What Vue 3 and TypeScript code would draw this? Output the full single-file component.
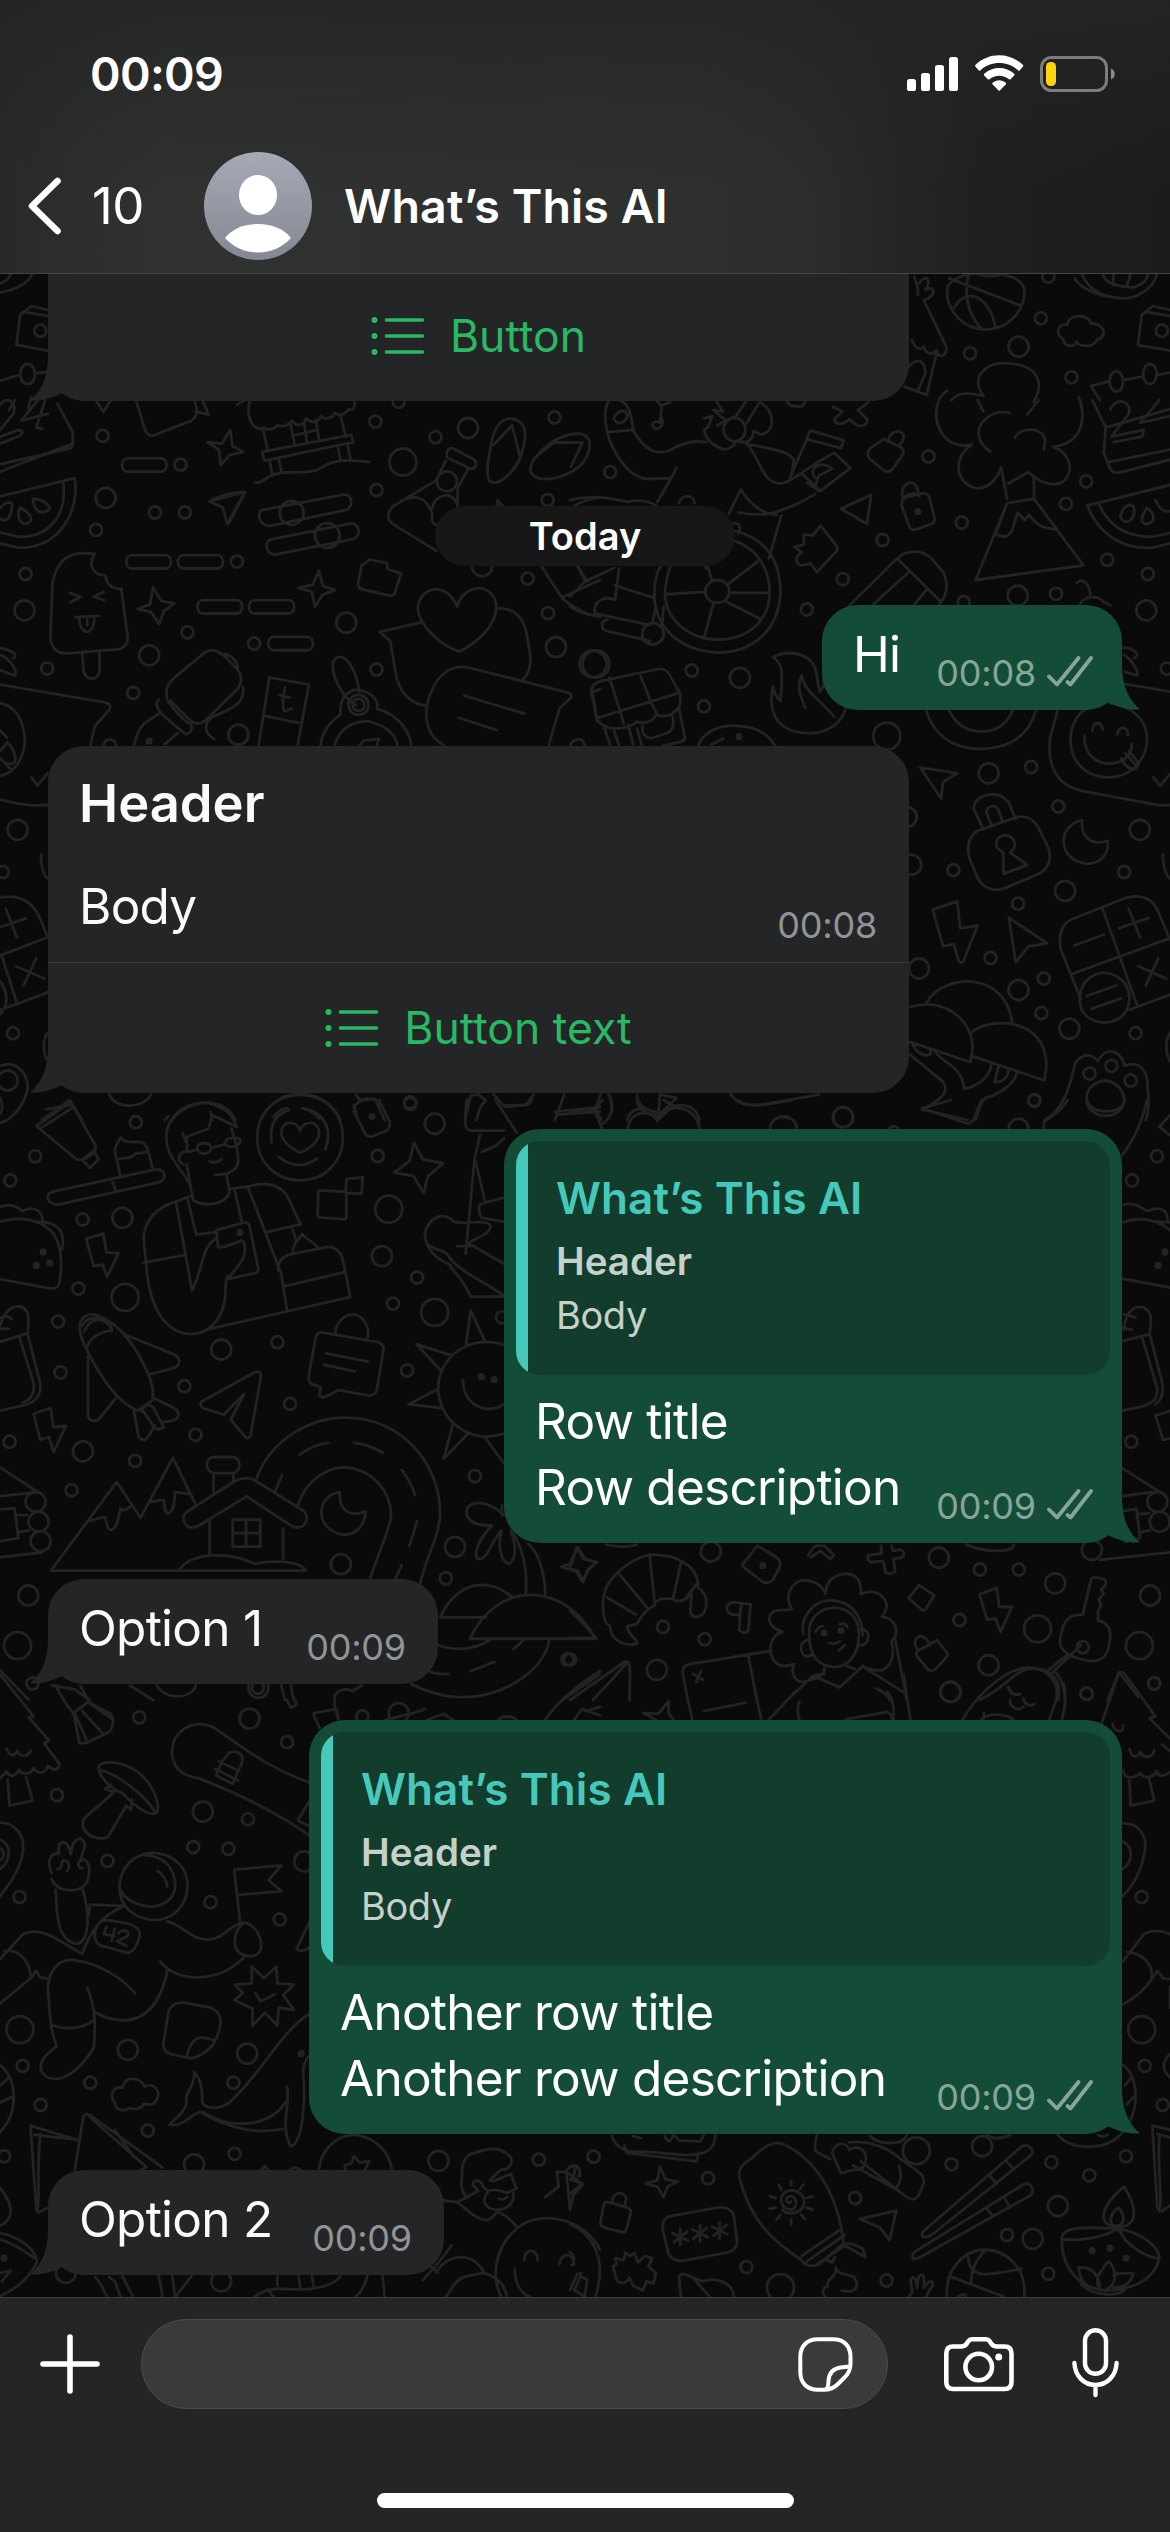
<script setup lang="ts">
interface Panel {
  /** x scale, y scale, x offset, y offset of the panel on the screen */
  at: [number, number, number, number]
  paths: string[]
  dots: [number, number, number][]
}

interface Message {
  id: number
  sent: boolean
  kind: 'plain' | 'card' | 'quote'
  lines: string[]
  time: string
  width: number
}

const messages: Message[] = [
  { id: 1, sent: true, kind: 'plain', lines: ['Hi'], time: '00:08', width: 300 },
  { id: 2, sent: false, kind: 'card', lines: ['Body'], time: '00:08', width: 861 },
  { id: 3, sent: true, kind: 'quote', lines: ['Row title', 'Row description'], time: '00:09', width: 618 },
  { id: 4, sent: false, kind: 'plain', lines: ['Option 1'], time: '00:09', width: 390 },
  { id: 5, sent: true, kind: 'quote', lines: ['Another row title', 'Another row description'], time: '00:09', width: 813 },
  { id: 6, sent: false, kind: 'plain', lines: ['Option 2'], time: '00:09', width: 396 },
]

const radii = [2.2, 6, 10, 13.5]

// Wallpaper doodles, grouped by the part of the screen they cover.
const panels: Panel[] = [
  {
    at: [0.7462, 0.33333, 0, 0],
    dots: [[1405, 830, 1], [1395, 955, 1], [1365, 1040, 2], [1300, 1060, 1], [1436, 1132, 1], [54, 992, 1], [1557, 992, 1]],
    paths: [
      'M1269 873C1269 800 1373 800 1373 873C1373 935 1350 989 1321 989S1269 935 1269 873',
      'M1272 835L1366 915M1278 925C1298 850 1328 900 1334 982M1298 822C1290 900 1300 950 1316 988M1310 822Q1325 835 1345 822',
      'M1425 1018C1412 1000 1420 965 1430 975C1432 940 1458 940 1462 970C1480 970 1485 1010 1470 1020C1465 1045 1445 1040 1443 1025C1440 1045 1425 1040 1425 1018Z',
      'M1225 830C1228 850 1232 870 1230 885M1232 850C1240 820 1250 840 1240 870C1255 850 1254 895 1238 900L1268 1040C1270 1075 1255 1075 1255 1050C1250 1070 1240 1060 1238 1040C1232 1055 1225 1040 1222 1020',
      'M1255 1060L1242 1185L1212 1160M1218 1100C1232 1065 1240 1090 1240 1120L1230 1172',
      'M1450 822C1458 870 1480 895 1510 895C1535 885 1548 850 1550 822M1478 822C1480 850 1500 862 1520 862C1535 850 1538 835 1538 822M1492 822V856M1515 822L1510 860M1440 835C1450 870 1470 890 1506 895',
      'M1568 930L1545 918L1530 945L1525 1035L1568 1052M1534 935L1568 948',
      'M64 930L42 918L27 945L22 1035L64 1052M31 935L64 948',
      'M0 1142L26 1125M48 1120L64 1115M37 1092C50 1092 50 1152 37 1152S24 1092 37 1092',
      'M1568 1118L1551 1125M1530 1130L1507 1140M1485 1145L1462 1158L1474 1200M1496 1114C1508 1114 1508 1174 1496 1174S1484 1114 1496 1114M1541 1092C1553 1092 1553 1152 1541 1152S1529 1092 1541 1092',
      'M0 878C20 870 38 850 43 822M0 850C8 845 12 835 15 822',
      'M1275 1200C1285 1175 1300 1178 1318 1188C1300 1130 1320 1085 1352 1090C1392 1095 1400 1150 1385 1206',
      'M42 1190L38 1225M20 1200L12 1230',
    ],
  },
  {
    at: [0.38265, 0.45918, 0, 400],
    dots: [[268, 78, 1], [472, 141, 1], [276, 213, 2], [251, 283, 1], [405, 245, 1], [483, 245, 1], [619, 352, 1], [67, 379, 1], [64, 458, 2], [123, 585, 1], [348, 638, 1], [390, 556, 2], [490, 506, 1], [664, 530, 1], [905, 485, 2], [623, 729, 2], [984, 587, 1], [984, 196, 1], [981, 47, 1], [1138, 81, 1], [1223, 61, 2], [1449, 38, 1], [1053, 135, 3], [1431, 218, 1], [1379, 389, 1], [1432, 464, 1], [1453, 538, 2], [1550, 575, 3], [46, 936, 2], [7, 1028, 1], [34, 1379, 1], [20, 1482, 2], [937, 664, 2], [937, 664, 1], [1168, 177, 2], [390, 743, 0], [1260, 362, 2], [287, 752, 1], [1072, 1530, 1], [1042, 4, 1]],
    paths: [
      'M0 10C20 -10 45 5 35 30L0 65M0 80L50 65Q66 68 52 78L0 95M110 -10L55 45L125 30M118 0L95 60L110 62M150 8L190 70V95L185 105L0 140M190 95L0 156',
      'M0 210L195 170C208 240 160 322 50 322L0 312M165 180C175 240 140 298 50 298L0 288M52 235C40 260 60 275 72 268C90 262 80 245 52 235M86 215C88 240 105 250 122 242C142 236 120 218 86 215M0 235C15 222 28 220 32 228C30 250 20 270 0 258',
      'M334 127H420C440 127 440 156 420 156H334C314 156 314 127 334 127ZM345 338H432C452 338 452 367 432 367H345C325 367 325 338 345 338ZM480 338H568C588 338 588 367 568 367H480C460 367 460 338 480 338ZM531 436H618C638 436 638 465 618 465H531C511 465 511 436 531 436ZM666 436H754C774 436 774 465 754 465H666C646 465 646 436 666 436ZM716 516H803C823 516 823 545 803 545H716C696 545 696 516 716 516Z',
      'M542 92L580 95L602 65L607 100L636 113L600 120L577 142L572 108ZM360 455L392 445L400 408L422 438L456 443L428 460L416 488L395 462ZM780 409L818 402L833 372L844 405L875 414L842 425L823 451L815 418ZM250 0L270 26L290 0',
      'M640 200L547 221L582 234L594 270ZM548 221C560 212 630 195 640 203L598 268',
      'M355 0L378 62Q385 82 405 76L500 45Q520 35 512 10L505 -5M512 25L545 32L530 2M620 10L650 -5',
      'M653 0C640 40 665 72 690 60C700 68 720 62 725 55C740 60 755 55 762 45C775 60 795 55 800 40C820 55 835 45 838 35C850 45 870 38 875 28C895 40 905 25 912 20C925 25 930 10 925 0M688 65L700 110M890 35L904 80M760 55L770 96M825 42L834 86M795 50L802 92M764 78L828 65M684 113L918 76L923 92L692 132ZM705 132L712 165M728 128L736 156M883 103L890 130M908 98L916 128M668 180C690 182 695 165 715 163C750 150 790 165 830 152C870 130 900 128 964 135',
      'M683 240L898 206C922 204 925 235 902 240L705 274C676 274 672 245 683 240M706 304L910 270C938 262 948 297 922 303L722 336C694 338 690 310 706 304M762 220C804 222 804 270 762 272C720 270 720 222 762 220M855 268C898 270 898 320 855 322C813 320 813 270 855 268',
      'M137 400C150 340 190 328 248 335C230 355 240 382 275 382C280 405 295 412 317 411L332 505C338 530 325 542 305 543L175 552C145 553 130 535 132 510ZM215 548L218 590C225 612 255 612 260 590V546M182 420L210 429L185 440M270 418L245 428L272 436M197 473L258 470M207 473C205 515 250 515 246 472M228 474V490',
      'M0 620L270 658Q295 662 285 675L248 710L236 752M0 660C40 665 65 700 65 745C60 790 30 815 0 818M0 720L18 735M20 745L0 765M25 750C50 780 42 800 15 790M0 780L30 806M82 822L98 840L125 812M0 870C60 882 90 885 125 882M0 540C30 545 50 555 35 562M0 555C20 560 50 590 38 600L0 588',
      'M350 752C360 720 370 705 385 700L415 683M430 750L465 725M437 650C430 630 440 618 455 605L535 550C555 540 570 545 590 560L618 585C635 600 632 618 620 630L540 695C525 708 508 708 490 692L445 655M415 652C395 670 430 690 485 728C500 725 505 715 498 705C480 700 450 670 438 655M575 553C605 550 620 570 622 585M635 625C640 660 610 670 570 685C530 695 530 725 560 738',
      'M676 752L704 604L807 620L778 752M690 688L787 704M745 626C740 640 735 670 745 678L762 672M730 642L756 648',
      'M930 665C880 640 850 565 885 560C910 555 935 600 938 635M890 685C885 640 925 625 945 633C975 640 990 655 985 672C1040 685 1070 720 1075 752M890 685C855 705 840 730 838 752M875 752C885 715 925 698 965 700C1010 710 1035 730 1038 752M940 752L950 742L990 738L985 752',
      'M1168 125C1165 105 1178 102 1190 108L1235 128C1250 135 1245 150 1230 150L1175 128M1165 132L1140 175L1030 230C1008 245 1012 262 1030 272L1140 328M1222 152L1196 192V232M1065 215C1100 205 1120 225 1130 248C1125 270 1140 275 1145 270M1130 235C1135 205 1185 195 1196 230',
      'M1283 100C1290 55 1315 35 1345 42C1378 50 1378 80 1360 125C1340 160 1310 182 1288 180C1270 178 1270 150 1283 100M1338 55L1290 98M1338 55L1358 120M1395 130C1430 90 1480 70 1520 74C1550 82 1545 110 1525 135C1495 165 1430 180 1400 168C1380 158 1385 145 1395 130M1448 92L1522 93L1492 145M1448 92L1395 128',
      'M945 360L955 355L965 347L1012 355L1012 368L1048 378L1032 420Q1028 428 1018 426L945 412Q934 408 936 398ZM1300 218L1315 232H1298Z',
      'M1200 548C1150 535 1095 490 1092 455C1092 410 1165 390 1195 450C1210 400 1290 395 1297 448C1300 490 1245 530 1200 548M1098 485L992 505L1020 525L1035 600C1045 640 1080 665 1115 665M1300 454C1350 452 1375 480 1380 530C1390 560 1388 590 1368 608',
      'M1160 752C1110 730 1105 680 1125 640C1145 595 1180 578 1220 582L1480 636Q1500 642 1490 650L1462 672L1434 752M1213 644L1370 683M1198 692L1298 719M1568 630L1548 636L1560 700M1490 752C1500 735 1525 735 1528 752',
      'M1500 232C1530 215 1568 212 1568 212M1415 362L1468 430L1568 392M1468 430C1490 450 1540 470 1568 472M1510 362L1535 395',
      'M0 1083C60 1075 90 1100 105 1130L125 1170M0 1210L125 1170M5 1212L45 1315M0 1328L45 1315L125 1290M15 1108L44 1170M0 1148L68 1129M42 1233L116 1260M95 1215L62 1275M0 1265C20 1290 25 1315 0 1338M108 990C105 1015 115 1035 125 1042M125 1378C112 1390 112 1420 122 1435M0 1450L10 1448C45 1440 75 1470 72 1500C65 1535 30 1568 0 1575M0 1520C10 1540 5 1550 0 1555',
      'M110 1568L182 1525L215 1568M120 1545L185 1535M285 1512C300 1545 375 1545 395 1512M450 1568C480 1520 590 1515 615 1568M550 1550L555 1568M680 1568C720 1495 850 1495 890 1568M715 1562Q735 1540 752 1543M790 1542Q820 1548 835 1565M930 1512L940 1525L980 1522L1005 1568M925 1535L935 1568M1215 1568L1230 1515L1250 1512L1270 1525L1255 1540L1245 1568M1290 1512L1320 1540L1375 1535L1395 1512M1475 1512L1450 1568M1450 1550L1568 1540M430 1568L440 1560',
    ],
  },
  {
    at: [0.38265, 0.45918, 570, 400],
    dots: [[105, 157, 1], [937, 123, 1], [1024, 267, 1], [817, 305, 1], [713, 390, 1], [619, 456, 1], [68, 575, 3], [318, 589, 1], [444, 605, 2], [350, 667, 1], [1170, 426, 2], [1270, 422, 1], [1296, 226, 1], [1349, 177, 1], [1404, 348, 1], [1510, 379, 1], [1506, 458, 2], [828, 732, 3], [1094, 813, 2], [1205, 799, 1], [1276, 885, 1], [1489, 936, 2], [1002, 1024, 1], [1448, 1028, 1], [1294, 1069, 2], [1171, 1097, 1], [1099, 1215, 1], [912, 1238, 2], [1238, 1260, 1], [1172, 1285, 2], [1232, 1335, 1], [1305, 1369, 2], [1478, 1379, 1], [1214, 1525, 1], [1358, 1467, 1], [1415, 1450, 1], [1465, 1482, 1], [909, 243, 0], [442, 733, 0], [713, 1562, 2], [1560, 585, 1], [1029, 440, 1], [892, 1012, 2], [880, 908, 2]],
    paths: [
      'M102 0C88 20 90 45 98 70L165 65C160 30 155 10 130 0M115 40C120 25 150 15 150 35C145 50 125 55 118 45M98 72C110 110 150 168 200 172L265 170L278 148M265 170L228 222M165 66C195 110 225 120 260 110C300 90 330 88 355 92',
      'M225 0L238 12L262 5M240 12L235 50C220 42 208 55 222 62C235 65 245 55 240 40',
      'M380 0L400 25L375 22L408 45L385 55M350 40L372 35L360 60L350 65C355 85 370 100 405 108C420 105 430 98 435 90M430 38C468 42 468 88 430 90C392 88 392 42 430 38M430 40L462 0M462 50L495 5C535 20 540 70 500 75L480 68C478 90 460 95 440 90',
      'M462 95C500 130 500 180 550 182C590 175 600 155 690 115L733 148L655 198L605 160M580 162L585 130C570 110 530 108 460 95M575 168L622 80M440 245C500 255 550 250 640 205M415 248L446 195C465 220 500 250 540 250M618 85L628 66L715 88L708 105ZM620 180L650 198M640 170C620 145 660 130 685 150L650 165L640 190M552 252L520 345',
      'M565 0L575 12L605 15L618 0M688 15L712 25L690 42C695 55 710 55 730 42L750 55C775 60 785 45 768 35L752 22L780 5',
      'M820 85L785 105Q773 115 783 128L820 153Q835 160 845 148L870 118Q875 108 862 102ZM832 90C835 65 870 62 872 80C872 90 865 95 858 100M875 210L900 203M869 210C862 180 902 168 908 195L912 210M880 211L925 203Q936 205 940 215L952 255Q955 265 945 270L905 282Q890 285 885 272L867 230Q865 215 880 211',
      'M787 207L708 237L735 250L776 270ZM587 320L612 315L610 293L635 295L655 273L698 320Q700 330 690 335L645 375L628 355C605 365 585 358 595 340L605 332Z',
      'M400 265L440 270Q448 280 440 292M285 225C290 205 325 205 325 225M0 218C60 205 110 215 150 222C180 215 210 222 225 230',
      'M385 280C500 285 550 340 550 420C545 500 480 550 385 550C290 545 220 500 220 420C222 385 230 370 238 362M360 362C350 375 350 362 385 300C470 305 520 350 522 420C520 485 460 522 385 522C310 520 250 480 248 420C250 395 255 380 262 362M385 392C427 394 427 440 385 442C343 440 343 394 385 392M415 400L490 352M250 423L350 418M417 420H520M375 442L350 520M405 438L495 476M370 392L360 362M0 450C20 462 50 468 70 470M20 362L40 395L0 428M40 395L115 366M128 366L118 435C85 425 60 440 65 465L210 490M118 404L215 430M98 478C80 480 80 498 95 503L210 525M215 485C255 490 255 530 215 533C180 530 180 490 215 485M225 452L215 485M240 495L245 450',
      'M960 50C950 20 965 -10 985 -20M960 50C975 90 1010 105 1050 97C1000 125 1005 180 1060 192C1090 195 1115 175 1127 147L1142 215M1065 0L1080 25M1225 0L1195 32M1148 28C1100 20 1065 50 1068 75C1070 95 1085 105 1098 112M1163 82C1180 55 1240 60 1242 90L1238 108M1330 -5C1350 40 1340 95 1262 102C1310 115 1320 160 1285 180C1250 190 1220 175 1198 157L1145 182M1212 168L1213 215L1142 225L1060 392L1342 360L1215 218M1140 230L1112 292C1130 300 1145 300 1155 285L1170 245L1188 262L1200 250C1220 275 1240 280 1272 282',
      'M1365 0L1400 60L1568 20M1400 60L1395 115L1412 150Q1420 160 1435 158L1568 130M1410 135L1568 108M1412 20C1430 -10 1470 5 1460 30L1415 80L1500 65L1495 80L1420 92M1540 0L1490 50L1568 35',
      'M1352 230L1568 185M1352 230C1380 290 1440 325 1520 322L1568 312M1382 226C1410 280 1460 298 1520 298L1568 290M1438 255C1445 230 1460 225 1473 232C1480 255 1460 272 1445 262ZM1508 235C1490 255 1490 270 1508 270C1535 265 1525 245 1508 235M1530 218C1540 238 1555 245 1568 242',
      'M725 452L855 345C880 325 920 325 945 345L975 375C990 400 985 425 965 445M855 345L970 440M885 375L790 447M935 410L900 445M1325 398C1345 385 1360 405 1360 430M1332 446C1345 425 1380 425 1395 440L1412 447',
      'M55 640C55 625 65 615 80 612L230 586C250 582 260 595 268 610L288 640C290 665 285 675 270 680C262 690 240 690 225 685C215 705 185 705 175 700C160 715 110 720 90 710C75 705 65 690 65 665ZM70 693L285 638M103 605L132 680L140 705M182 595L210 655L225 680M90 715L105 752M115 720L128 752M175 715L188 752M152 708L165 750M190 710C185 730 205 740 220 735L255 725C270 720 272 705 268 688M285 670L300 735Q300 742 290 744L240 754',
      'M530 560C580 540 640 555 645 600L652 635C670 625 662 605 665 598C700 620 725 650 720 670M530 560C560 575 555 600 550 655C535 645 530 625 530 625C520 670 530 705 580 720C640 735 700 720 720 675M605 600C590 625 605 650 615 670M605 600C615 640 660 655 690 690',
      'M335 752C350 720 400 705 440 710C490 712 520 730 535 752M370 750L400 737M930 675C950 730 1000 760 1075 760C1150 758 1200 730 1218 675M990 675C1010 710 1040 722 1075 722C1115 722 1140 708 1158 675',
      'M1275 675L1255 735C1245 800 1275 840 1340 852L1510 878C1530 882 1550 884 1568 882M1410 660C1470 665 1510 700 1508 740C1505 790 1460 822 1405 822C1350 820 1308 790 1308 740C1308 705 1330 675 1365 668M1345 732C1340 810 1470 808 1468 748M1365 720C1365 700 1390 698 1392 718M1430 728C1435 708 1458 710 1458 730M1440 780C1455 805 1480 812 1485 795C1485 785 1470 775 1462 765M1452 770L1475 792M1525 822L1542 840L1568 815M1445 540C1475 540 1492 555 1475 562M1448 555C1475 570 1490 600 1480 600L1450 592M1448 618L1568 635',
      'M915 800L1012 813L975 832L970 868ZM1080 935L1055 890C1055 855 1140 840 1155 895L1165 912M1103 928L1088 900C1088 880 1118 880 1120 895L1130 917M1065 938L1170 908C1190 905 1210 912 1222 928L1250 975C1260 1000 1250 1018 1230 1030L1140 1062C1110 1073 1080 1065 1065 1040L1045 1000C1035 975 1042 950 1065 938M1132 985C1105 975 1110 948 1138 948C1168 950 1168 978 1150 985L1195 1013L1133 1032Z',
      'M1338 915C1335 950 1360 972 1405 960C1410 985 1390 1010 1350 1010C1310 1005 1290 985 1290 960C1290 938 1310 920 1338 915M1550 990C1548 1015 1558 1035 1568 1042M948 1110L1012 1092L1020 1150L1065 1145L1028 1222Q1020 1230 1015 1220L1003 1185L975 1190ZM1147 1128L1247 1183L1198 1190L1165 1224Z',
      'M1282 1195C1275 1150 1295 1135 1320 1128L1450 1085C1490 1075 1520 1085 1535 1110L1568 1175M1312 1250L1568 1172M1392 1108L1482 1318M1282 1195L1335 1305M1462 1328L1568 1295M1395 1247C1440 1250 1462 1275 1462 1305C1460 1335 1435 1355 1395 1356C1355 1353 1332 1335 1332 1305C1332 1275 1355 1250 1395 1247M1350 1298L1428 1275M1363 1326L1440 1303M1318 1188L1395 1164M1460 1108L1490 1170M1435 1150L1512 1128M1485 1233L1558 1260M1538 1215L1505 1275',
      'M888 1322C970 1300 1055 1345 1052 1415L1046 1442L888 1398M932 1312C980 1245 1140 1245 1155 1355M1048 1378C1090 1345 1245 1340 1245 1450L1240 1482L1055 1430M888 1425L975 1485C990 1505 980 1520 920 1545L1040 1568M895 1402C905 1425 930 1430 942 1425V1415M955 1420C975 1445 1025 1450 1030 1500C1060 1495 1095 1480 1102 1446M1120 1450L1110 1485C1130 1487 1145 1475 1145 1460M1168 1465C1160 1495 1110 1515 1085 1520C1070 1535 1065 1555 1060 1568',
      'M1240 1568C1295 1545 1310 1480 1320 1445C1335 1425 1360 1420 1380 1440C1395 1410 1435 1410 1450 1450C1480 1440 1510 1450 1510 1500C1515 1535 1510 1555 1505 1568M1398 1482C1430 1485 1450 1505 1448 1530C1440 1555 1355 1560 1350 1520C1350 1500 1370 1485 1398 1482M1568 1378C1555 1395 1555 1420 1568 1440',
      'M0 1550L65 1545L80 1512M68 1545L82 1568M100 1512C115 1530 115 1555 95 1568M235 1512L230 1568M235 1512L278 1520L235 1555C220 1545 180 1550 175 1515M245 1555C270 1525 330 1530 338 1568M150 1568C155 1545 190 1535 220 1552M420 1512C440 1540 480 1538 520 1532L650 1513M540 1565Q555 1558 575 1565',
    ],
  },
  {
    at: [0.38265, 0.38265, 0, 1100],
    dots: [[355, 58, 1], [92, 147, 1], [27, 210, 1], [216, 312, 1], [320, 308, 2], [205, 493, 1], [327, 516, 3], [152, 579, 1], [578, 652, 2], [725, 633, 1], [158, 712, 1], [482, 748, 1], [511, 875, 1], [25, 893, 1], [217, 918, 2], [353, 943, 1], [187, 1020, 1], [758, 794, 1], [1064, 707, 1], [1090, 464, 1], [1136, 555, 3], [1027, 532, 1], [998, 408, 2], [1016, 285, 3], [987, 146, 1], [1136, 62, 2], [972, 43, 0], [74, 1295, 2], [46, 1426, 3], [85, 1525, 1], [891, 1213, 2], [1189, 1168, 2], [1165, 1250, 1], [1241, 983, 1], [1483, 1462, 1], [113, 397, 0], [95, 432, 0], [130, 426, 0], [1258, 723, 0], [1291, 731, 0], [627, 346, 0], [93, 1050, 2], [101, 1102, 2], [106, 1153, 2], [1312, 568, 1], [674, 1536, 1], [1072, 10, 1]],
    paths: [
      'M95 68L185 5L250 120C250 140 225 160 200 155ZM105 75L190 20M215 155L245 133L258 155L235 178Z',
      'M315 198L300 135C300 115 310 110 315 98C330 115 350 108 370 110C388 120 385 132 400 182M305 155L340 150L355 140L388 135M135 240L405 182C430 178 440 205 415 215L155 273C125 275 115 248 135 240M292 208L303 238',
      'M498 225C470 170 430 145 435 90C440 30 510 5 545 8C590 20 610 40 618 70L555 40L545 75L490 95C485 110 490 125 488 135C465 135 460 160 480 168M478 88L490 120M605 75C612 100 625 130 622 165C615 190 590 195 562 196M495 135L515 130M548 160Q560 168 578 155M515 125C515 110 550 108 552 125C550 145 518 145 515 125M588 112C590 95 630 95 628 108C622 125 592 128 588 112M555 125L590 115M488 168C495 210 500 240 505 262C535 280 590 275 600 240L592 195',
      'M500 250L462 265C410 280 380 310 375 360L385 460C395 540 430 610 500 612C540 610 580 580 588 520C590 490 588 475 595 460M375 425L485 405M460 268L502 498C520 460 525 430 535 400C545 370 560 365 568 360M490 258L513 352L562 345M612 232L632 318M600 232L650 226C700 210 740 225 755 260L785 325L698 345M648 228L735 455L750 548M565 340L640 320Q650 320 652 330L675 440Q676 450 668 452L595 468L625 430C650 400 640 355 625 370C600 380 585 385 570 385ZM540 600L915 515C905 460 900 430 892 405C880 385 865 382 850 385L760 403C735 410 725 425 728 445M742 487L900 450M765 402C765 370 780 370 790 350C800 365 820 370 830 385M762 330L775 370',
      'M784 -15C850 -15 896 35 896 98S850 210 784 210S672 160 672 98S720 -15 784 -15M784 138C750 120 735 100 735 85C735 55 775 50 784 80C793 50 835 55 834 85C834 105 815 125 784 138M710 112C703 70 715 40 755 26M790 22C850 30 870 80 850 130M728 148Q780 190 830 152',
      'M925 20C930 5 950 0 960 -5M925 30L955 90Q965 100 980 92L1010 80Q1022 70 1018 55L990 0M832 242Q832 236 838 236L905 240V305Q905 312 898 312L835 307Q830 305 830 298ZM906 206L948 202L945 245L903 243ZM1030 190L1070 160L1082 112L1105 155L1158 165L1118 200L1107 243L1080 198ZM225 363L270 349L278 398L310 400L280 462L268 430L245 434Z',
      'M0 280C30 265 50 285 60 290C90 275 110 290 112 318M0 318C60 300 110 315 140 350C160 380 165 420 155 480Q150 495 130 492L0 468M100 318C160 320 170 350 162 390M0 590C10 555 30 535 55 540C80 550 75 580 72 610L0 632M0 570Q20 560 30 572M0 598H22M50 618L88 740C92 765 80 785 60 790M72 612L105 740C110 780 80 795 60 798L0 812M88 820L132 805L140 855L172 852L140 920L128 880L105 888Z',
      'M208 590C212 560 240 555 260 565C310 585 350 640 370 680C390 720 405 750 398 785L360 812C300 790 250 700 225 650C212 620 208 610 208 590M228 645C235 620 265 605 292 602C280 570 240 560 220 605M215 590C230 555 290 570 292 600M325 612L455 665C475 675 470 695 455 700L388 718M230 670V825C235 845 255 840 262 830L302 780M350 812L362 880C375 895 385 885 390 875L405 850M370 812C380 790 400 795 405 812L428 855C415 865 405 860 400 850L370 808M400 778L455 805C475 820 465 835 450 838L428 842',
      'M875 612C880 565 925 545 950 575C962 590 965 605 960 628M845 608L985 632Q1006 638 1002 655L985 755Q980 775 960 772L885 758L845 778L835 772L838 750L818 743Q805 740 807 720L825 620Q830 605 845 608M852 662L962 684M848 692L928 709M527 788L665 712Q682 705 682 722L655 875Q650 890 640 880L603 835L638 768L585 822L530 805Q520 795 527 788',
      'M1230 550L1268 632M1230 550L1218 640M1088 638L1182 668M1088 638L1155 710M1068 795L1145 755M1068 795L1155 805M1160 937L1183 848M1160 937L1222 873M1268 882L1317 950M1317 640C1230 610 1145 670 1145 755C1150 850 1240 900 1317 872M1210 732C1210 800 1275 825 1317 795M1110 350C1120 305 1160 290 1185 318C1220 328 1260 310 1280 325C1290 350 1240 360 1225 375L1317 428M1110 350C1115 400 1150 420 1175 430C1190 460 1200 450 1230 514H1317M1118 378C1150 400 1160 390 1170 405C1200 450 1260 470 1317 512M1255 90L1240 155L1217 402M1195 382H1240M1243 160L1268 268L1317 255M1317 100L1295 120L1260 135M1268 268C1245 270 1250 290 1258 308L1317 318M1220 0C1215 50 1210 75 1230 80H1317M1295 0L1350 85M1317 15L1380 12L1390 0M1568 30L1455 38',
      'M133 1230L305 998L367 1092L452 935L510 1055M133 1230H800C780 1200 700 1205 665 1212C600 1180 500 1180 467 1230M235 1100C250 1095 265 1090 275 1090C280 1110 280 1125 292 1123C305 1120 310 1090 315 1068C330 1080 340 1060 345 1060M395 1050L428 1045C430 1065 430 1080 440 1080C455 1075 455 1050 458 1025L500 1030M548 1100V1188M740 1120V1198M490 1115C475 1100 475 1082 495 1072L615 995C635 985 650 985 668 995L795 1075C812 1095 795 1125 765 1115L645 1036L520 1112Q505 1120 490 1115M558 1028V975C535 970 535 935 558 933H610C632 938 630 970 610 975H558M610 975V995M608 1097H680V1167H608ZM643 1097V1167M608 1132H680',
      'M670 990C710 880 820 830 900 830C1050 830 1150 950 1150 1080C1150 1140 1110 1200 1098 1265M778 1060C800 990 860 960 900 960C980 965 1022 1030 1022 1085C1020 1120 990 1180 967 1252M720 1020L737 980M783 927Q820 900 857 896M927 896Q965 900 1000 922M1050 967Q1075 1000 1085 1033M1090 1100L1070 1166M1050 1215L1033 1253M888 1025C885 1060 905 1095 955 1075C955 1110 930 1138 897 1136C860 1130 840 1105 840 1078C840 1050 860 1028 888 1025',
      'M0 960L100 1025L0 1035M0 1070L38 1067L48 1145L0 1153M42 1085H70M48 1130L75 1125M0 1195L110 1182M1317 1085C1280 1050 1240 1045 1222 1065C1210 1095 1240 1115 1285 1112C1250 1150 1235 1190 1250 1200C1275 1200 1280 1160 1310 1125C1300 1170 1310 1205 1330 1213C1350 1200 1350 1170 1335 1125M1312 1085V1060M1340 1130C1370 1180 1378 1240 1374 1290M1380 1160C1410 1180 1425 1250 1425 1292M1467 1220L1495 1210L1507 1170L1525 1200L1557 1208L1535 1230L1523 1260L1505 1232Z',
      'M1150 1352C1200 1250 1280 1250 1340 1300M1150 1352H1270M1228 1408C1300 1250 1480 1260 1556 1408ZM1145 1425Q1220 1450 1283 1410M1436 1410C1420 1500 1300 1568 1190 1560C1150 1558 1100 1540 1075 1527M1125 1495Q1150 1502 1172 1500M1230 1493L1292 1468M1342 1435L1370 1410M0 1490L75 1568M135 1530L195 1540L235 1568M340 1530L400 1568M410 1530C430 1568 500 1568 512 1530M875 1568C870 1540 910 1535 920 1545L945 1530M735 1530L745 1568M760 1530L768 1568M1470 1568L1568 1500',
    ],
  },
  {
    at: [0.38265, 0.38265, 570, 1100],
    dots: [[714, 45, 2], [558, 78, 3], [1213, 2, 1], [1172, 75, 2], [1534, 147, 1], [1469, 210, 1], [1555, 397, 0], [1537, 432, 0], [1467, 893, 1], [1535, 1050, 2], [1541, 1102, 2], [1364, 1176, 2], [368, 1180, 2], [504, 1217, 0], [964, 1196, 2], [1071, 1227, 1], [1173, 1227, 1], [1018, 1359, 1], [1268, 1263, 2], [1516, 1295, 2], [1222, 1382, 3], [1488, 1426, 3], [1340, 1430, 1], [1094, 1477, 2], [994, 1547, 2], [1350, 1552, 1], [1526, 1525, 1], [243, 1377, 1], [352, 1409, 1], [227, 1489, 2], [0, 1462, 1], [664, 1393, 0], [708, 1387, 0], [846, 85, 1]],
    paths: [
      'M0 32L65 30L85 78M65 25L85 0M105 0C115 25 105 50 85 62M175 0C180 30 200 35 225 42L228 55L270 15L245 0M150 78C155 30 205 20 228 52C265 -10 340 30 338 78M435 0C470 20 500 15 580 0M920 22L995 0M920 22L1035 60Q1045 65 1055 50L1075 0M1300 0C1280 40 1235 50 1238 62V78M1350 0C1355 55 1445 55 1448 0M1508 0C1490 80 1460 120 1443 145M1568 40L1540 70L1568 92',
      'M1443 275C1480 262 1500 290 1510 290C1550 275 1560 290 1562 315M1443 320C1500 300 1545 320 1568 340M1443 467L1568 490M1535 318L1568 320M1448 600C1450 560 1470 535 1500 542C1525 560 1518 580 1515 612L1443 630M1448 560L1478 568M1443 595L1468 600M1495 620L1535 755C1535 785 1520 790 1500 800L1443 812M1515 612L1548 740C1552 770 1545 785 1530 795M1568 812L1530 825L1550 888L1568 885M1443 962L1550 1030M1443 1035L1520 1025M1443 1075L1480 1068L1490 1145L1450 1155M1485 1082L1512 1080M1490 1130L1515 1125M1385 1202L1568 1182',
      'M0 1220L5 1200L20 1168L40 1200L72 1208L48 1225L35 1258L20 1230L0 1225M450 1215L490 1165L540 1195Q552 1205 548 1220L530 1255Q518 1265 505 1260L455 1222ZM622 1190L640 1165H665L690 1190L680 1200L655 1178L630 1195M778 1190L815 1185L812 1165M840 1165L845 1178L865 1175Q880 1185 868 1195L845 1200L850 1230Q842 1242 825 1235L818 1205L785 1208Q775 1200 778 1190M1035 1162C1090 1185 1160 1182 1160 1162M95 1162Q140 1172 175 1162',
      'M90 1355C80 1320 90 1280 100 1265C120 1230 170 1195 210 1188C240 1190 270 1190 290 1205C320 1220 335 1240 335 1275C360 1290 360 1320 350 1340C330 1360 312 1350 315 1330L318 1290C300 1310 285 1315 270 1305C240 1300 225 1305 220 1320C205 1330 190 1340 175 1370L150 1375C150 1400 180 1410 175 1420C150 1430 105 1415 105 1375Q90 1365 90 1355M208 1190L222 1320M130 1240L200 1325M97 1300L172 1345M290 1210L270 1300M335 1260L300 1305',
      'M472 1318L425 1312C400 1320 405 1350 445 1345L442 1385Q458 1400 466 1385L472 1318M442 1350L448 1320M0 1335C30 1360 55 1390 68 1406H0',
      'M555 1390C520 1380 510 1350 535 1335C560 1330 575 1335 580 1330C560 1300 575 1260 610 1255C640 1255 660 1270 667 1290C670 1240 720 1230 745 1245C765 1260 760 1285 760 1292C790 1275 820 1290 828 1320C825 1340 820 1345 815 1350C850 1355 865 1390 840 1415C850 1450 840 1480 815 1490C790 1492 770 1485 765 1478M555 1390C520 1400 520 1440 530 1460C545 1485 565 1480 585 1475C575 1500 590 1525 615 1520C650 1510 665 1505 665 1485M625 1395C620 1310 755 1300 755 1395C755 1460 720 1482 690 1482C655 1480 625 1460 625 1395M610 1395C600 1350 640 1305 685 1308C735 1310 765 1350 765 1400M755 1385C790 1375 785 1430 755 1425M625 1410C595 1415 600 1450 620 1455L632 1450M642 1390Q650 1375 660 1375M705 1370Q720 1365 725 1378M678 1418Q690 1425 705 1415M703 1438L718 1425',
      'M522 1440L310 1475Q292 1480 295 1500L308 1568M466 1452L488 1568M568 1568L635 1505L705 1535L765 1480L875 1550M850 1410L880 1568M635 1505L665 1500M322 1500L348 1515M342 1492L330 1522M800 1538C830 1550 835 1568 835 1568M725 1480L745 1487',
      'M885 1302L912 1268L952 1295L928 1333L920 1333ZM1070 1292L1115 1275L1122 1325L1155 1325L1125 1390L1112 1355L1090 1358ZM908 1440Q900 1450 912 1460L935 1488Q945 1495 955 1487L985 1455Q990 1448 982 1440L960 1412ZM910 1440C885 1410 920 1385 935 1415L940 1425M1360 1260Q1362 1243 1378 1248L1395 1252Q1405 1258 1398 1270L1388 1280L1395 1290L1382 1305L1388 1320L1380 1335V1360C1420 1370 1415 1400 1405 1440C1390 1475 1360 1470 1315 1455C1280 1440 1275 1420 1285 1390C1295 1345 1320 1345 1340 1345ZM1335 1425L1262 1495M1300 1450L1250 1490M1070 1568C1150 1530 1160 1485 1215 1485C1270 1490 1285 1530 1275 1568M1265 1490L1280 1510C1290 1530 1295 1568 1295 1568M1145 1535C1150 1555 1165 1555 1175 1552M1405 1568L1435 1495L1485 1560M0 1568L140 1470C160 1460 158 1480 155 1568M150 1470L60 1568',
    ],
  },
  {
    at: [0.38265, 0.42088, 0, 1650],
    dots: [[364, 160, 1], [652, 163, 2], [750, 219, 1], [149, 345, 1], [530, 384, 2], [648, 402, 1], [505, 468, 1], [597, 472, 1], [281, 501, 1], [795, 502, 2], [51, 587, 1], [550, 599, 1], [731, 640, 1], [52, 902, 3], [59, 988, 1], [334, 950, 2], [236, 1028, 1], [646, 959, 2], [610, 1028, 1], [106, 1081, 1], [386, 1142, 1], [11, 1203, 1], [507, 1222, 2], [613, 1197, 1], [787, 959, 0], [1042, 150, 2], [947, 158, 1], [1146, 1214, 2], [1408, 1211, 1], [1551, 1204, 1], [578, 1500, 2], [172, 1480, 2], [10, 1445, 0], [675, 90, 2]],
    paths: [
      'M0 58L88 158L75 160L128 215L115 222L155 270C155 290 135 285 125 275C120 295 95 295 88 280C80 300 55 295 50 285C40 305 20 300 18 288L0 305M18 235C25 255 40 252 45 240C55 260 75 250 80 240M20 308L25 370L85 358L68 302M0 410C40 410 65 440 60 480C50 530 20 560 0 585M0 450C35 465 25 505 0 520M0 470C15 480 10 495 0 500',
      'M145 83C160 110 180 140 192 150L232 122M192 150L208 222L228 220L285 195C295 185 300 165 290 152L235 125M195 150L228 218M215 145L270 200M235 128L295 165M210 85L232 122',
      'M260 290C245 260 300 265 330 275C400 300 420 370 410 385C395 400 350 370 320 340C290 330 270 310 260 290M258 285C300 290 380 345 405 385M290 320L275 330L298 338L220 400C200 440 270 460 285 440L330 370L342 380L345 355',
      'M810 315C700 280 640 235 560 185C510 160 445 190 450 250C455 290 490 300 520 305C620 340 720 385 808 440M580 265L598 245C620 235 640 250 632 268L608 318L565 298ZM562 282L622 310M572 265L620 285M808 360L778 405L808 418',
      'M145 570C150 620 145 690 200 698C235 695 235 625 215 565M135 530C120 500 135 480 155 485C145 455 175 440 185 485C190 440 220 440 222 465L210 500C235 490 240 530 225 555C200 580 150 575 135 545M150 520C160 525 160 505 165 500C180 500 185 515 175 525M210 500C200 505 205 520 215 518M232 630L235 605L320 608M215 722C235 670 265 630 325 608M400 482C460 485 490 520 490 562C488 610 450 642 400 642C350 638 312 610 312 562C315 515 350 483 400 482M380 488C440 490 458 530 458 562C455 590 430 610 390 610C350 605 325 590 315 570M412 525Q435 540 437 562',
      'M438 645C480 655 500 690 545 688C590 685 600 650 640 648C670 655 690 690 680 715C665 735 625 730 615 705C610 680 620 660 635 650M628 650L612 522L735 512L702 547L735 573L625 582M418 740C460 790 570 795 640 728M438 760C420 840 380 880 320 880C290 878 265 870 248 860M250 665Q255 640 285 642L335 650Q370 660 365 680Q355 715 335 720L275 705Q240 700 250 665M278 658L272 675L298 680M300 662L292 690M310 672C325 660 345 672 330 682L305 692L330 702',
      'M0 735L60 675C110 655 150 690 215 722M12 715C50 710 80 740 80 780L0 840M80 780L95 762L105 778L130 782M125 800C130 755 160 730 200 738C260 745 320 780 352 815M125 800C130 860 130 900 148 942C120 960 100 980 108 1000C130 1035 190 1025 245 945C250 890 250 850 228 803M135 890C170 905 220 900 247 878',
      'M613 795L658 792V752L690 780L722 752L725 792L768 795L740 820L768 855L728 850L725 892L692 862L660 892V852L613 832L635 815ZM668 815L680 835L718 818M440 860Q450 835 480 838L550 850Q580 860 576 890Q570 920 555 940Q530 965 500 970L455 962Q420 955 428 930ZM488 968C500 915 525 915 560 928',
      'M808 865C740 900 680 1010 600 1075C570 1095 530 1090 528 1070C530 1030 515 1010 508 1003C510 1040 480 1050 488 1078C475 1110 450 1115 443 1128C480 1135 500 1100 525 1098C600 1140 680 1150 738 1138M530 1098C620 1150 720 1120 745 1075M750 1038C760 1080 730 1130 760 1180C790 1170 800 1080 792 1000C795 980 800 970 808 965M808 648L775 710Q790 720 808 708M300 1075C285 1060 295 1035 320 1040C325 1010 370 1015 378 1038C400 1025 425 1050 408 1070C400 1085 385 1080 375 1078C370 1095 345 1090 340 1088C320 1100 300 1090 300 1075',
      'M80 1135L95 1330Q98 1340 110 1332L125 1325M80 1130L205 1165M90 1152L190 1162M105 1150C95 1250 105 1300 98 1330M195 1238L218 1108Q225 1100 235 1105L425 1230M235 1110L382 1228L365 1238M300 1140L350 1205M0 985C45 1020 50 1100 0 1145M0 1035L20 1018M0 1075L35 1060M0 1278C35 1320 40 1350 0 1368M0 1385C50 1395 90 1420 97 1452C80 1490 40 1520 0 1535M0 1400C50 1415 80 1440 95 1448M0 1480L28 1475L5 1500',
      'M833 1238C840 1170 900 1150 930 1152C990 1160 1020 1200 1025 1238M905 1238L900 1225L918 1220L925 1202L940 1218L965 1215L952 1238M680 1238L692 1226L703 1238M755 1238Q770 1222 788 1238M1160 1308L1195 1312C1220 1330 1240 1350 1270 1355C1290 1352 1290 1340 1305 1330M1195 1312L1250 1285M1250 1285L1235 1270C1240 1255 1260 1260 1262 1275L1275 1285C1290 1280 1310 1285 1325 1290L1350 1280L1335 1245L1290 1262L1280 1260L1308 1235C1340 1235 1345 1205 1325 1198C1300 1175 1260 1190 1240 1195C1210 1200 1205 1230 1208 1250C1200 1280 1215 1300 1225 1300M1275 1288C1255 1310 1270 1330 1300 1330C1330 1330 1345 1310 1342 1290M1303 1303Q1315 1310 1325 1300M1300 1335Q1330 1345 1350 1370',
      'M1425 1300L1460 1275L1455 1240L1480 1240C1485 1220 1520 1220 1515 1250M1480 1240L1523 1270L1498 1295L1490 1330ZM1495 1255Q1505 1240 1502 1228M1295 1480C1300 1400 1360 1350 1430 1350C1500 1350 1550 1390 1568 1425M1295 1480Q1295 1510 1310 1537M1370 1450C1370 1420 1405 1420 1405 1450M1462 1460C1465 1430 1500 1430 1500 1460M1345 1470C1345 1510 1365 1530 1385 1537M1518 1480Q1515 1500 1500 1520L1530 1537M1105 1497L1140 1462L1180 1415M1125 1465L1145 1478M1140 1480C1170 1430 1240 1430 1265 1480C1300 1490 1320 1510 1325 1537M1265 1480C1210 1490 1200 1490 1185 1510L1165 1537M1000 1488L1005 1537M960 1488Q950 1520 930 1537M250 1490L265 1510L280 1537M285 1490L300 1500L315 1537M320 1488L348 1537M415 1488L425 1537M450 1488L458 1537L500 1488M665 1537C720 1500 760 1530 830 1515C860 1510 880 1500 890 1488M700 1520L715 1537M725 1488V1510M780 1488L785 1515M815 1488L820 1515',
      'M1568 50C1500 90 1450 130 1425 167M1500 167L1520 140L1568 155M1530 145L1568 135M1005 167C1050 155 1090 150 1110 140M820 150L880 140L885 167M820 155L835 185M875 119C870 130 880 145 882 160M750 119L760 137L775 130L773 122M1115 167L1140 158L1160 152L1185 167M1302 167C1310 155 1340 155 1350 167',
    ],
  },
  {
    at: [0.38265, 0.42088, 570, 1650],
    dots: [[994, 99, 2], [1350, 103, 1], [1527, 79, 1], [1494, 587, 1], [1494, 902, 3], [1502, 988, 1], [1549, 1081, 1], [1453, 1203, 1], [1357, 1248, 1], [1258, 1217, 1], [1077, 1179, 2], [997, 1222, 1], [905, 1190, 3], [1275, 1321, 2], [1142, 1390, 1], [1209, 1399, 2], [1250, 1482, 1], [745, 1302, 1], [361, 1255, 1], [62, 1204, 1], [461, 1466, 1], [827, 1498, 1], [550, 1515, 3], [1365, 1427, 0], [1411, 1421, 0], [1453, 1445, 0]],
    paths: [
      'M192 150L230 152L258 122V150L272 168M192 150L225 167M308 119L320 167M350 145L460 125M480 80L500 167M518 167L590 98M600 122Q590 140 600 167M830 100C850 125 845 150 845 167M720 165L830 147L840 155L842 167M872 60L890 167M1025 167C1060 110 1130 50 1190 42C1260 40 1280 90 1270 119L1252 167M1290 80C1300 120 1290 150 1285 167M1145 88C1155 105 1165 108 1175 105M1150 120C1150 140 1175 145 1185 135M1185 115C1190 135 1205 133 1215 128M1082 150L1080 167M1075 165C1100 145 1150 155 1160 167',
      'M1388 178L1432 60Q1438 48 1448 55L1530 158L1515 162L1568 210M1547 225L1568 240M1418 175C1420 195 1448 200 1445 180M1462 235C1468 260 1485 255 1490 243C1500 260 1525 255 1527 238M1445 285C1450 310 1475 305 1490 292C1500 310 1530 300 1532 288C1540 305 1555 298 1568 290M1462 310L1465 370L1527 358L1512 302',
      'M1445 412C1480 410 1510 435 1502 480C1490 540 1460 570 1445 585M1445 455C1475 470 1470 505 1445 520M1445 740L1500 675Q1530 660 1568 675M1455 717C1495 720 1525 745 1520 782C1500 810 1470 830 1445 842M1520 782L1535 762L1550 780L1568 782M1568 800L1568 850M1568 960C1545 980 1548 1000 1568 1015M1445 985C1490 1020 1490 1100 1440 1150M1450 1035L1465 1018M1455 1080L1475 1060M1275 1152C1310 1190 1400 1190 1440 1150M1380 1152Q1390 1160 1405 1152',
      'M1522 1135L1535 1325Q1540 1340 1552 1330L1568 1320M1522 1130L1568 1140M1535 1150L1568 1158M1540 1155C1535 1250 1550 1310 1540 1330',
      'M110 1155C120 1190 160 1195 200 1192L300 1200C350 1200 380 1190 380 1152M142 1178L148 1195L330 1215L337 1195M165 1155L185 1160M248 1155Q260 1180 270 1152M275 1155L285 1165L340 1168L350 1152M1090 1152Q1110 1168 1150 1152',
      'M197 1268L228 1260L235 1228L250 1258L282 1263L255 1275L245 1300L228 1275ZM88 1318Q90 1310 100 1312L150 1325Q162 1328 158 1340L148 1375Q145 1385 135 1383L88 1372Q78 1368 80 1358ZM110 1312C110 1285 145 1285 147 1305L142 1322M0 1228L15 1225C25 1230 30 1240 22 1250M0 1258L32 1268L0 1292M262 1345L385 1325Q420 1320 428 1345L436 1400Q440 1425 410 1432L300 1450Q260 1455 255 1425L242 1375Q240 1350 262 1345M288 1375V1413M268 1385L308 1403M306 1382L272 1407M340 1367V1405M320 1377L360 1395M358 1373L322 1399M391 1360V1398M371 1370L411 1388M409 1366L375 1392',
      'M112 1465L122 1460L118 1445L140 1450L145 1432L155 1440L168 1433L178 1455L195 1440L215 1445L205 1465L225 1480L218 1505L200 1500L190 1522L165 1510L155 1492C145 1508 125 1508 120 1490ZM290 1537L285 1490Q290 1478 305 1485L345 1500C380 1490 425 1500 428 1537M320 1490L365 1537M0 1365C50 1380 80 1430 78 1480Q75 1520 65 1537M0 1430C15 1440 12 1455 5 1462M0 1520L20 1482M30 1490L45 1495L38 1537',
      'M442 1250C440 1220 470 1215 490 1195C515 1175 540 1165 560 1175C640 1210 700 1290 715 1410L650 1460Q620 1470 605 1450C540 1410 470 1360 442 1250M605 1440L710 1375M618 1453L718 1390M640 1463L718 1415M718 1415L772 1442L765 1422L735 1410L715 1412M672 1450L685 1455L692 1443M578 1310C570 1320 560 1305 568 1300C590 1290 600 1320 580 1330C550 1330 545 1300 560 1290C580 1275 615 1290 612 1315C605 1340 570 1345 555 1330M578 1262V1272M545 1270L553 1283M523 1298L537 1302M522 1328L537 1325M540 1353L550 1342M578 1352V1366M605 1342L614 1352M618 1325L634 1330M618 1302L634 1298M600 1282L610 1270',
      'M645 1152C640 1180 635 1190 650 1195L680 1210M760 1215L880 1300Q900 1312 912 1295L925 1265Q925 1250 915 1243L835 1190C800 1175 770 1165 730 1170M708 1243L685 1195C695 1165 725 1170 730 1188C755 1170 790 1195 765 1230ZM850 1280C870 1260 865 1240 860 1225M740 1225L850 1280M757 1352L853 1332L835 1402L810 1372ZM785 1155C800 1175 870 1180 880 1152',
      'M925 1380L1180 1180C1200 1170 1215 1190 1205 1200L945 1390Q920 1402 920 1385ZM1095 1248L1115 1268M1138 1212L1158 1232M900 1430L1185 1270C1205 1260 1215 1285 1205 1295L910 1445Q890 1452 896 1435ZM1088 1325L1105 1345M1135 1300L1148 1322',
      'M985 1537C980 1470 1030 1425 1085 1425C1140 1425 1195 1470 1187 1537M1040 1437C1040 1500 1100 1485 1180 1470M998 1490L1135 1537M1085 1427C1060 1450 1050 1470 1048 1505M1015 1537Q1030 1525 1035 1537M885 1537L895 1525L890 1500C895 1480 905 1495 908 1515C905 1480 930 1470 925 1515C940 1490 960 1500 940 1520L930 1537M695 1467C700 1490 745 1480 745 1495C755 1510 750 1530 710 1522M695 1467C700 1490 665 1495 675 1510C655 1515 660 1530 668 1537',
      'M1285 1400C1285 1370 1340 1370 1430 1375C1500 1385 1540 1420 1540 1445C1530 1490 1480 1520 1400 1522C1330 1515 1285 1470 1285 1400M1285 1400C1330 1405 1400 1395 1425 1378L1435 1378L1450 1400C1480 1430 1520 1445 1540 1445M1448 1275C1400 1310 1385 1345 1400 1360C1420 1378 1460 1375 1472 1350C1478 1330 1465 1300 1448 1275M1433 1325C1405 1345 1410 1370 1428 1368C1450 1368 1452 1345 1433 1325M1408 1453C1380 1480 1370 1500 1385 1518M1408 1453C1435 1480 1425 1510 1400 1520M1330 1467C1365 1465 1380 1485 1385 1510M1330 1467C1330 1500 1355 1520 1385 1518M1420 1485C1440 1475 1460 1485 1472 1480C1465 1510 1440 1515 1420 1515M1335 1505C1360 1535 1430 1537 1450 1520',
    ],
  },
]

const num = (n: number) => Math.round(n * 10) / 10
const circles = panels.flatMap((p) =>
  p.dots.map(([x, y, size]) => ({
    x: num(x * p.at[0] + p.at[2]),
    y: num(y * p.at[1] + p.at[3]),
    r: radii[size],
    solid: size === 0,
  })),
)
const groups = panels.map((p) => ({
  transform: `translate(${p.at[2]} ${p.at[3]}) scale(${p.at[0]} ${p.at[1]})`,
  d: p.paths.join(''),
}))
</script>

<template>
  <div class="screen">
    <header class="top">
      <div class="status">
        <span class="clock">00:09</span>
        <div class="indicators">
          <svg class="signal" width="51" height="34" viewBox="0 0 51 34" fill="#fff">
            <rect x="0" y="22" width="9" height="12" rx="2.6" />
            <rect x="14" y="16" width="9" height="18" rx="2.6" />
            <rect x="28" y="8" width="9" height="26" rx="2.6" />
            <rect x="42" y="0" width="9" height="34" rx="2.6" />
          </svg>
          <svg class="wifi" width="48.4" height="36.4" viewBox="584.5 104.5 145 109" fill="#fff">
            <path d="M586 134C626 96 688 96 728 134Q730 137 728 140L718 151Q716 153 713 150C682 121 632 121 601 150Q598 153 596 151L586 140Q584 137 586 134Z" />
            <path d="M612 161C637 138 677 138 702 161Q704 164 702 166L691 177Q689 179 686 177C670 163 644 163 628 177Q625 179 623 177L612 166Q610 164 612 161Z" />
            <path d="M637 188C649 178 665 178 677 188Q678 190 677 192L659 211Q657 213 655 211L637 192Q636 190 637 188Z" />
          </svg>
          <svg class="battery" width="76" height="36" viewBox="0 0 76 36">
            <rect x="1.5" y="1.5" width="65" height="33" rx="10" fill="none" stroke="#7c7c7c" stroke-width="3" />
            <path d="M71 12.5C76 14.5 76 21.5 71 23.5Z" fill="#8b8b8b" />
            <rect x="6" y="6" width="10" height="24" rx="4.5" fill="#fdd50b" />
          </svg>
        </div>
      </div>
      <div class="nav">
        <svg class="back" width="34" height="58" viewBox="0 0 34 58" fill="none" stroke="#fff" stroke-width="6.6" stroke-linecap="round" stroke-linejoin="round">
          <path d="M29.500 4L4 29L29.500 54" />
        </svg>
        <span class="unread">10</span>
        <svg class="avatar" width="108" height="108" viewBox="0 0 108 108">
          <defs>
            <linearGradient id="avatar-fill" x1="0" y1="0" x2="0" y2="1">
              <stop offset="0" stop-color="#a5aab6" />
              <stop offset="1" stop-color="#838892" />
            </linearGradient>
          </defs>
          <circle cx="54" cy="54" r="54" fill="url(#avatar-fill)" />
          <ellipse cx="54" cy="43" rx="19" ry="20" fill="#fff" />
          <path d="M21 86C28 77 40 72 54 72S80 77 87 86C79 95 67 100.500 54 100.500S29 95 21 86Z" fill="#fff" />
        </svg>
        <span class="name">What’s This AI</span>
      </div>
    </header>

    <main class="chat">
      <svg class="wallpaper" width="1170" height="2023" viewBox="0 274 1170 2023" aria-hidden="true">
        <g v-for="(g, i) in groups" :key="i" :transform="g.transform">
          <path :d="g.d" />
        </g>
        <circle v-for="(c, i) in circles" :key="'c' + i" :class="{ solid: c.solid }" :cx="c.x" :cy="c.y" :r="c.r" />
      </svg>

      <div class="row">
        <div class="bubble received first">
          <div class="action">
            <svg class="list" width="54" height="38" viewBox="0 0 54 38"><path d="M15.500 3H51.500M15.500 19H51.500M15.500 35H51.500" /><circle cx="3.500" cy="3" r="3" /><circle cx="3.500" cy="19" r="3" /><circle cx="3.500" cy="35" r="3" /></svg>
            <span>Button</span>
          </div>
          <svg class="tail" width="42" height="42" viewBox="0 0 42 42"><path d="M18 0C17 20 11 32 0 41.500C12 42 22 39 32 34L42 24V0Z" /></svg>
        </div>
      </div>

      <div class="day">Today</div>

      <div v-for="m in messages" :key="m.id" class="row" :class="{ right: m.sent }">
        <div class="bubble" :class="[m.sent ? 'sent' : 'received', m.kind]" :style="{ width: m.width + 'px' }">
          <div v-if="m.kind === 'quote'" class="quoted">
            <div class="quoted-name">What’s This AI</div>
            <div class="quoted-header">Header</div>
            <div class="quoted-body">Body</div>
          </div>
          <div v-if="m.kind === 'card'" class="card-header">Header</div>
          <div class="content">
            <div class="lines">
              <div v-for="line in m.lines" :key="line">{{ line }}</div>
            </div>
            <div class="meta">
              <span>{{ m.time }}</span>
              <svg v-if="m.sent" class="checks" width="46" height="31" viewBox="0 0 46 31"><path d="M2 20.500L10 28.500L31.500 2M20.500 26L23.500 28.500L44 2" /></svg>
            </div>
          </div>
          <div v-if="m.kind === 'card'" class="action bordered">
            <svg class="list" width="54" height="38" viewBox="0 0 54 38"><path d="M15.500 3H51.500M15.500 19H51.500M15.500 35H51.500" /><circle cx="3.500" cy="3" r="3" /><circle cx="3.500" cy="19" r="3" /><circle cx="3.500" cy="35" r="3" /></svg>
            <span>Button text</span>
          </div>
          <svg class="tail" width="42" height="42" viewBox="0 0 42 42"><path d="M18 0C17 20 11 32 0 41.500C12 42 22 39 32 34L42 24V0Z" /></svg>
        </div>
      </div>
    </main>

    <footer class="bottom">
      <div class="composer">
        <svg class="plus" width="60" height="60" viewBox="0 0 60 60" fill="none" stroke="#fff" stroke-width="5.600" stroke-linecap="round"><path d="M30 3V57M3 30H57" /></svg>
        <div class="field">
          <svg width="55" height="55" viewBox="0 0 55 55" fill="none" stroke="#fff" stroke-width="4" stroke-linecap="round" stroke-linejoin="round">
            <path d="M20 2.300H35C46 2.300 52.500 9 52.500 20V27C52.500 33 50.500 37 46 41L40 47C36 51 32 52.700 26 52.700H20C9 52.700 2.300 46 2.300 35V20C2.300 9 9 2.300 20 2.300Z" />
            <path d="M51.500 29.500L42.500 30.500C35.500 31.500 31 36 30.500 44C30.300 48 30 50.500 28.500 52" />
          </svg>
        </div>
        <svg class="camera" width="70" height="55" viewBox="0 0 70 55" fill="none" stroke="#fff" stroke-width="4.600" stroke-linejoin="round">
          <path d="M9 9.500H17C20 9.500 21.500 8.500 23 6.200L24.500 4C25.500 2.600 26.500 2.300 28 2.300H42C43.500 2.300 44.500 2.600 45.500 4L47 6.200C48.500 8.500 50 9.500 53 9.500H60.500C65 9.500 67.500 12 67.500 16.500V45C67.500 49.500 65 52 60.500 52H9C4.500 52 2.300 49.500 2.300 45V16.500C2.300 12 4.500 9.500 9 9.500Z" />
          <circle cx="34.700" cy="30" r="13.300" />
          <circle cx="54.700" cy="20" r="3.500" fill="#fff" stroke="none" />
        </svg>
        <svg class="mic" width="48" height="70" viewBox="0 0 48 70" fill="none" stroke="#fff" stroke-width="4.400" stroke-linecap="round">
          <rect x="13" y="2.300" width="21" height="43.500" rx="10.500" />
          <path d="M2.400 35C3 48 12 57 23.500 57S44 48 44.600 35M23.500 57V67" />
        </svg>
      </div>
      <div class="home" />
    </footer>
  </div>
</template>

<style>
body {
  margin: 0;
  background: #0a0a0a;
}
</style>

<style scoped>
.screen {
  width: 1170px;
  height: 2532px;
  display: flex;
  flex-direction: column;
  overflow: hidden;
  background: #0a0a0a;
  color: #fff;
  font-family: Inter, Roboto, sans-serif;
}

.top {
  position: relative;
  z-index: 2;
  box-sizing: border-box;
  flex: none;
  height: 274px;
  border-bottom: 1px solid #434546;
  background:
    linear-gradient(180deg, rgba(36, 36, 36, 0.85) 0, rgba(36, 36, 36, 0) 70%),
    linear-gradient(90deg, #292929 0, #303232 14%, #2e302f 60%, #2b2b2b 70%, #1f1f1f 84%, #1c1c1c 100%);
}

.status {
  display: flex;
  justify-content: space-between;
  padding: 44px 54px 0 90px;
  height: 60px;
}

.clock {
  font-size: 46.5px;
  font-weight: 600;
  line-height: 60px;
  letter-spacing: -0.7px;
}

.indicators {
  display: flex;
  align-items: flex-start;
  padding-top: 11px;
}

.signal {
  margin-top: 2px;
  margin-right: 17px;
}

.battery {
  margin-top: 1px;
  margin-left: 16.5px;
}

.nav {
  display: flex;
  align-items: center;
  padding: 48px 0 0 28px;
  height: 108px;
}

.unread {
  width: 112px;
  padding-left: 30px;
  font-size: 51px;
  line-height: 60px;
  letter-spacing: -0.5px;
}

.name {
  margin-left: 32px;
  font-size: 46.5px;
  font-weight: 600;
  line-height: 60px;
  letter-spacing: 0.1px;
}

.chat {
  position: relative;
  flex: none;
  height: 2023px;
}

.wallpaper {
  position: absolute;
  inset: 0;
}

.wallpaper path,
.wallpaper circle {
  fill: none;
  stroke: #232323;
  stroke-width: 2.8;
  stroke-linecap: round;
  stroke-linejoin: round;
  vector-effect: non-scaling-stroke;
}

.wallpaper .solid {
  fill: #232323;
}

.row {
  position: relative;
  display: flex;
  padding: 0 48px;
  margin-bottom: 36px;
}

.right {
  justify-content: flex-end;
}

.bubble {
  position: relative;
  box-sizing: border-box;
  border-radius: 36px;
}

.received {
  background: #242527;
  color: #fafafa;
}

.sent {
  background: #144d37;
}

.first {
  width: 861px;
  margin-top: -64px;
  margin-bottom: 69px;
  padding-top: 60px;
}

.tail {
  position: absolute;
  left: -18px;
  bottom: 0;
  fill: #242527;
}

.sent .tail {
  left: auto;
  right: -18px;
  transform: scaleX(-1);
  fill: #144d37;
}

.action {
  position: relative;
  z-index: 1;
  box-sizing: border-box;
  height: 131px;
  display: flex;
  align-items: center;
  justify-content: center;
  gap: 25px;
  font-size: 44.5px;
  line-height: 54px;
  color: #29b864;
}

.bordered {
  border-top: 1px solid #37383a;
}

.list {
  fill: #29b864;
  stroke: none;
}

.list path {
  stroke: #29b864;
  stroke-width: 3.6;
  stroke-linecap: round;
}

.day {
  position: relative;
  width: 300px;
  height: 60px;
  margin: 0 auto 39px;
  border-radius: 30px;
  background: #171717;
  font-size: 38px;
  font-weight: 600;
  line-height: 60px;
  text-align: center;
}

.content {
  display: flex;
  justify-content: space-between;
  padding: 16px 32px 0 31px;
}

.sent .content {
  padding-right: 29px;
}

.lines {
  padding-bottom: 23px;
  font-size: 49.5px;
  line-height: 66px;
  letter-spacing: -0.75px;
  white-space: nowrap;
}

.meta {
  align-self: flex-end;
  display: flex;
  gap: 11px;
  margin-bottom: 17px;
  font-size: 36px;
  line-height: 40px;
  letter-spacing: -0.2px;
  color: #929395;
}

.sent .meta {
  color: #87a699;
}

.checks {
  margin-top: 3px;
  fill: none;
  stroke: #87a699;
  stroke-width: 3.8;
  stroke-linecap: round;
  stroke-linejoin: round;
}

.card-header {
  padding: 24px 31px 21px;
  font-size: 52.5px;
  font-weight: 600;
  line-height: 66px;
}

.quote {
  padding-top: 12px;
}

.quote .content {
  padding-top: 13px;
}

.quoted {
  box-sizing: border-box;
  height: 234px;
  margin: 0 12px;
  padding: 30px 28px 0 40px;
  border-radius: 24px;
  background: linear-gradient(90deg, #46c9bb 12px, #123c2c 12px);
  line-height: 54px;
  color: #c5d1cb;
}

.quoted-name {
  margin-bottom: 9px;
  font-size: 44px;
  font-weight: 600;
  letter-spacing: 0.1px;
  color: #46c9bb;
}

.quoted-header {
  font-size: 38.5px;
  font-weight: 600;
}

.quoted-body {
  font-size: 38px;
  letter-spacing: -0.4px;
}

.bottom {
  position: relative;
  box-sizing: border-box;
  height: 235px;
  border-top: 1px solid #3c3d3d;
  background: #242625;
}

.composer {
  display: flex;
  align-items: center;
  height: 90px;
  padding: 21px 0 0 40px;
}

.field {
  box-sizing: border-box;
  width: 747px;
  height: 90px;
  margin-left: 41px;
  margin-right: 56px;
  padding-right: 34px;
  border: 1px solid #4b4b4b;
  border-radius: 45px;
  background: #3a3a3a;
  display: flex;
  align-items: center;
  justify-content: flex-end;
}

.mic {
  margin-left: 57.5px;
  margin-top: -3px;
}

.home {
  width: 417px;
  height: 15px;
  margin: 84px auto 0;
  border-radius: 8px;
  background: #fff;
}
</style>
